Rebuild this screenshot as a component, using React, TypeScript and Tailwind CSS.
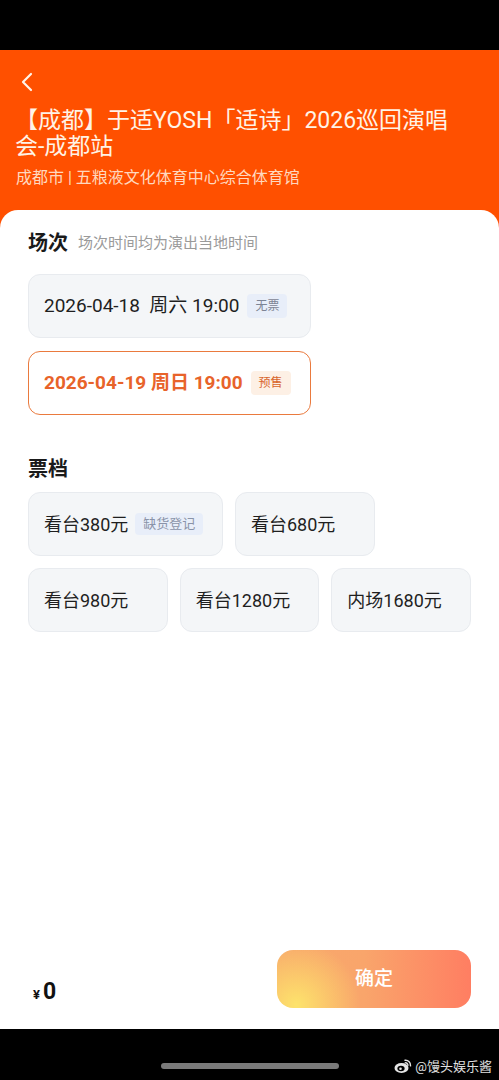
import React from "react";

const font = { fontFamily: 'Roboto, "Noto Sans CJK SC", "Noto Sans", sans-serif' };

function Weibo() {
  return (
    <svg width="18" height="16" viewBox="0 0 18 16" fill="none">
      <ellipse cx="7.5" cy="10" rx="7" ry="5" fill="#e5e5e5" />
      <ellipse cx="7" cy="10.5" rx="3.6" ry="2.8" fill="#000" />
      <circle cx="6.5" cy="10.8" r="1.3" fill="#e5e5e5" />
      <path d="M11 2.2a5 5 0 0 1 5.5 5.6" stroke="#e5e5e5" strokeWidth="1.5" strokeLinecap="round" />
      <path d="M11.2 4.8a2.4 2.4 0 0 1 2.7 2.7" stroke="#e5e5e5" strokeWidth="1.3" strokeLinecap="round" />
    </svg>
  );
}

export default function App() {
  return (
    <div className="h-[1080px] w-[499px] flex flex-col bg-black overflow-hidden" style={font}>
      <div className="h-[50px] shrink-0 bg-black" />
      <div className="flex-1 flex flex-col bg-[#ff5000]">
        <div className="pt-[20px] pb-[22px] px-[15px]">
          <div className="h-[24px] flex items-center pl-[5px]">
            <svg width="14" height="20" viewBox="0 0 14 20" fill="none">
              <path d="M11 2L3 10l8 8" stroke="#fff4ea" strokeWidth="2.2" strokeLinecap="round" strokeLinejoin="round" />
            </svg>
          </div>
          <div className="mt-[14px] w-[450px] text-[23px] leading-[26px] text-[#fff3e6]">
            【成都】于适YOSH「适诗」2026巡回演唱会-成都站
          </div>
          <div className="mt-[8px] text-[16px] leading-[20px] text-[#ffd8bf] pl-[1px]">
            成都市 | 五粮液文化体育中心综合体育馆
          </div>
        </div>
        <div className="flex-1 flex flex-col bg-white rounded-t-[18px] px-[28px]">
          <div className="pt-[19px] flex items-center gap-[10px] h-[47px]">
            <span className="text-[20px] leading-[28px] font-bold text-[#1a1a1a]">场次</span>
            <span className="text-[15px] leading-[28px] text-[#9a9a9a]">场次时间均为演出当地时间</span>
          </div>
          <div className="mt-[17px] flex flex-col gap-[13px]">
            <div className="w-[283px] h-[64px] rounded-[12px] bg-[#f4f6f8] border border-[#e8ebef] flex items-center pl-[15px] gap-[8px]">
              <span className="text-[19px] text-[#1f1f1f]">2026-04-18&nbsp; 周六 19:00</span>
              <span className="h-[24px] px-[8px] rounded-[4px] bg-[#e8eef9] text-[12px] leading-[24px] text-[#7d8494]">无票</span>
            </div>
            <div className="w-[283px] h-[64px] rounded-[12px] bg-white border-[1.5px] border-[#ea7a3e] flex items-center pl-[15px] gap-[8px]">
              <span className="text-[19px] font-bold text-[#e8632a]">2026-04-19 周日 19:00</span>
              <span className="h-[24px] px-[8px] rounded-[4px] bg-[#fdf0e5] text-[12px] leading-[24px] text-[#d8652c]">预售</span>
            </div>
          </div>
          <div className="mt-[40px] text-[20px] leading-[28px] font-bold text-[#1a1a1a]">票档</div>
          <div className="mt-[9px] flex flex-col gap-[12px]">
            <div className="flex gap-[12px]">
              <div className="w-[195px] h-[64px] rounded-[12px] bg-[#f4f6f8] border border-[#e8ebef] flex items-center pl-[15px] gap-[7px]">
                <span className="text-[18px] text-[#1f1f1f]">看台380元</span>
                <span className="h-[22px] px-[8px] rounded-[4px] bg-[#e8eef9] text-[13px] leading-[22px] text-[#8a93a8]">缺货登记</span>
              </div>
              <div className="w-[140px] h-[64px] rounded-[12px] bg-[#f4f6f8] border border-[#e8ebef] flex items-center pl-[15px]">
                <span className="text-[18px] text-[#1f1f1f]">看台680元</span>
              </div>
            </div>
            <div className="flex gap-[12px]">
              {["看台980元", "看台1280元", "内场1680元"].map((t) => (
                <div key={t} className="w-[140px] h-[64px] rounded-[12px] bg-[#f4f6f8] border border-[#e8ebef] flex items-center pl-[15px]">
                  <span className="text-[18px] text-[#1f1f1f]">{t}</span>
                </div>
              ))}
            </div>
          </div>
          <div className="flex-1" />
          <div className="pb-[21px] flex items-center justify-between">
            <div className="flex items-baseline pl-[5px] pt-[26px]">
              <span className="text-[13px] font-bold text-[#111]">¥</span>
              <span className="ml-[3px] text-[23px] font-bold text-[#111] leading-none">0</span>
            </div>
            <div className="w-[194px] h-[58px] rounded-[16px] flex items-center justify-center text-[19px] font-medium text-white bg-[radial-gradient(circle_at_10%_95%,#fde36c_0%,rgba(253,227,108,0)_35%),linear-gradient(90deg,#f8a96c_0%,#f9a56b_45%,#ff7e62_100%)]">
              确定
            </div>
          </div>
        </div>
      </div>
      <div className="h-[51px] shrink-0 bg-black relative flex items-end justify-center pb-[11px]">
        <div className="w-[178px] h-[6px] rounded-full bg-[#7a7a7a]" />
        <div className="absolute right-[7px] bottom-[4px] flex items-center gap-[3px]">
          <Weibo />
          <span className="text-[13px] text-[#e0e0e0]">@馒头娱乐酱</span>
        </div>
      </div>
    </div>
  );
}
